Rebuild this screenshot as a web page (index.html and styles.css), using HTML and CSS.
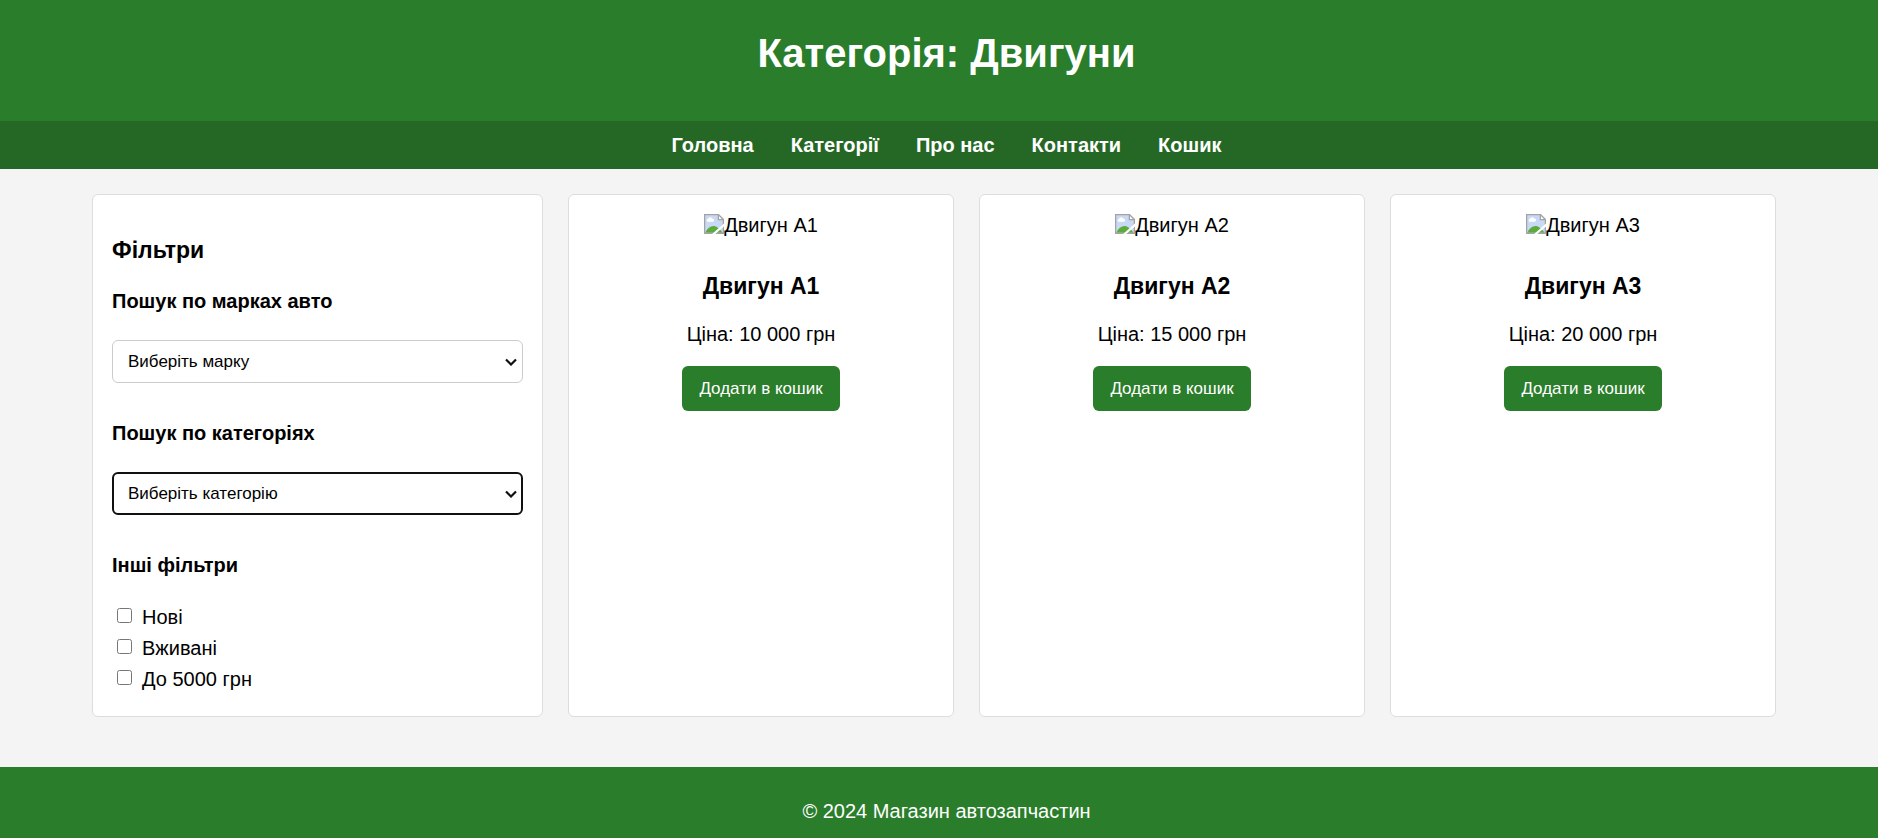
FILE: index.html
```html
<!DOCTYPE html>
<html lang="uk">
<head>
<meta charset="utf-8">
<title>Категорія: Двигуни</title>
<link rel="stylesheet" href="styles.css">
</head>
<body>
<svg class="sprite" aria-hidden="true">
  <symbol id="missing" viewBox="0 0 16 16">
    <path d="M0.5 0.5h11l4 4v11H0.5z" fill="#c8d9f6"/>
    <path d="M2.600 6.200a1.400 1.400 0 0 1 .6-2.400 1.800 1.800 0 0 1 3.300-.1 1.300 1.300 0 0 1 .7 2.500z" fill="#fff"/>
    <path d="M1 15c1.500-3.600 4-5.400 6.500-5.400S12 11.500 15 15z" fill="#5cab3c"/>
    <path d="M0.500 16V0.500h11l4 4V16M0 15.500h16" fill="none" stroke="#a3a3a3"/>
    <path d="M11.500 0.500v4h4z" fill="#fff" stroke="#a3a3a3"/>
    <path d="M16 7.500V10L9 16H6.500z" fill="#fff"/>
  </symbol>
  <symbol id="chevron" viewBox="0 0 12 8">
    <path d="M1 1.500 6 6.500l5-5" fill="none" stroke="#101010" stroke-width="2.200"/>
  </symbol>
</svg>
<header class="header"><h1 class="title">Категорія: Двигуни</h1></header>
<nav class="nav">
  <a class="nav-link" href="#">Головна</a>
  <a class="nav-link" href="#">Категорії</a>
  <a class="nav-link" href="#">Про нас</a>
  <a class="nav-link" href="#">Контакти</a>
  <a class="nav-link" href="#">Кошик</a>
</nav>
<main class="main">
  <aside class="panel filters">
    <h2 class="heading">Фільтри</h2>
    <h3 class="subheading"><label for="brand">Пошук по марках авто</label></h3>
    <div class="field">
      <select class="select" id="brand"><option>Виберіть марку</option></select>
      <svg class="chevron" aria-hidden="true"><use href="#chevron"/></svg>
    </div>
    <h3 class="subheading"><label for="category">Пошук по категоріях</label></h3>
    <div class="field">
      <select class="select select-active" id="category"><option>Виберіть категорію</option></select>
      <svg class="chevron" aria-hidden="true"><use href="#chevron"/></svg>
    </div>
    <h3 class="subheading">Інші фільтри</h3>
    <div class="checks">
      <label class="check"><input class="box" type="checkbox">Нові</label>
      <label class="check"><input class="box" type="checkbox">Вживані</label>
      <label class="check"><input class="box" type="checkbox">До 5000 грн</label>
    </div>
  </aside>
  <article class="panel product">
    <div class="picture"><svg class="missing" aria-hidden="true"><use href="#missing"/></svg>Двигун A1</div>
    <h3 class="heading">Двигун A1</h3>
    <p class="price">Ціна: 10 000 грн</p>
    <button class="button" type="button">Додати в кошик</button>
  </article>
  <article class="panel product">
    <div class="picture"><svg class="missing" aria-hidden="true"><use href="#missing"/></svg>Двигун A2</div>
    <h3 class="heading">Двигун A2</h3>
    <p class="price">Ціна: 15 000 грн</p>
    <button class="button" type="button">Додати в кошик</button>
  </article>
  <article class="panel product">
    <div class="picture"><svg class="missing" aria-hidden="true"><use href="#missing"/></svg>Двигун A3</div>
    <h3 class="heading">Двигун A3</h3>
    <p class="price">Ціна: 20 000 грн</p>
    <button class="button" type="button">Додати в кошик</button>
  </article>
</main>
<footer class="footer"><p class="copyright">© 2024 Магазин автозапчастин</p></footer>
</body>
</html>
```
FILE: styles.css
```css
* {
  box-sizing: border-box;
}

body {
  display: flex;
  flex-direction: column;
  min-height: 100vh;
  margin: 0;
  background: #f4f4f4;
  color: #000;
  font: 20px/23px "Liberation Sans", Arial, sans-serif;
}

h1, h2, h3, p {
  margin: 0;
}

.sprite {
  display: none;
}

.header {
  padding: 30px 0 45px 15px;
  background: #2a7d2a;
  color: #fff;
  text-align: center;
}

.title {
  font-size: 40px;
  line-height: 46px;
}

.nav {
  display: flex;
  flex-wrap: wrap;
  justify-content: center;
  gap: 37px;
  padding: 12px 0 12px 15px;
  background: #256825;
}

.nav-link {
  color: #fff;
  font-weight: bold;
  line-height: 24px;
  text-decoration: none;
}

.main {
  display: grid;
  grid-template-columns: 451px repeat(3, 1fr);
  gap: 25px;
  padding: 25px 102px 50px 92px;
}

.panel {
  padding: 19px;
  border: 1px solid #ddd;
  border-radius: 6px;
  background: #fff;
}

.heading {
  font-size: 23px;
  line-height: 26px;
}

.filters {
  padding: 42px 19px 25px;
}

.subheading {
  margin: 39px 0 27px;
  font-size: 20px;
}

.heading + .subheading {
  margin-top: 27px;
}

.field {
  position: relative;
}

.select {
  display: block;
  width: 100%;
  height: 43px;
  padding: 0 32px 0 15px;
  border: 1px solid #ccc;
  border-radius: 6px;
  outline: 0;
  background: #fff;
  color: #000;
  font: 17px "Liberation Sans", Arial, sans-serif;
  appearance: none;
}

.select-active {
  padding-left: 14px;
  border: 2px solid #101010;
}

.chevron {
  position: absolute;
  top: 18px;
  right: 6px;
  width: 12px;
  height: 8px;
  pointer-events: none;
}

.checks {
  display: flex;
  flex-direction: column;
  align-items: flex-start;
  gap: 8px;
  padding-top: 2px;
}

.check {
  display: flex;
  align-items: center;
  gap: 10px;
}

.box {
  width: 15px;
  height: 15px;
  margin: 0 0 4px 5px;
}

.product {
  display: flex;
  flex-direction: column;
  align-items: center;
}

.picture {
  display: flex;
  margin-bottom: 36px;
}

.missing {
  width: 20px;
  height: 20px;
}

.price {
  margin: 24px 0 20px;
}

.button {
  padding: 12px 17px;
  border: 0;
  border-radius: 6px;
  background: #2a7d2a;
  color: #fff;
  font: 17px/21px "Liberation Sans", Arial, sans-serif;
}

.footer {
  flex-grow: 1;
  padding: 33px 0 15px 15px;
  background: #2a7d2a;
  color: #fff;
  text-align: center;
}
```
